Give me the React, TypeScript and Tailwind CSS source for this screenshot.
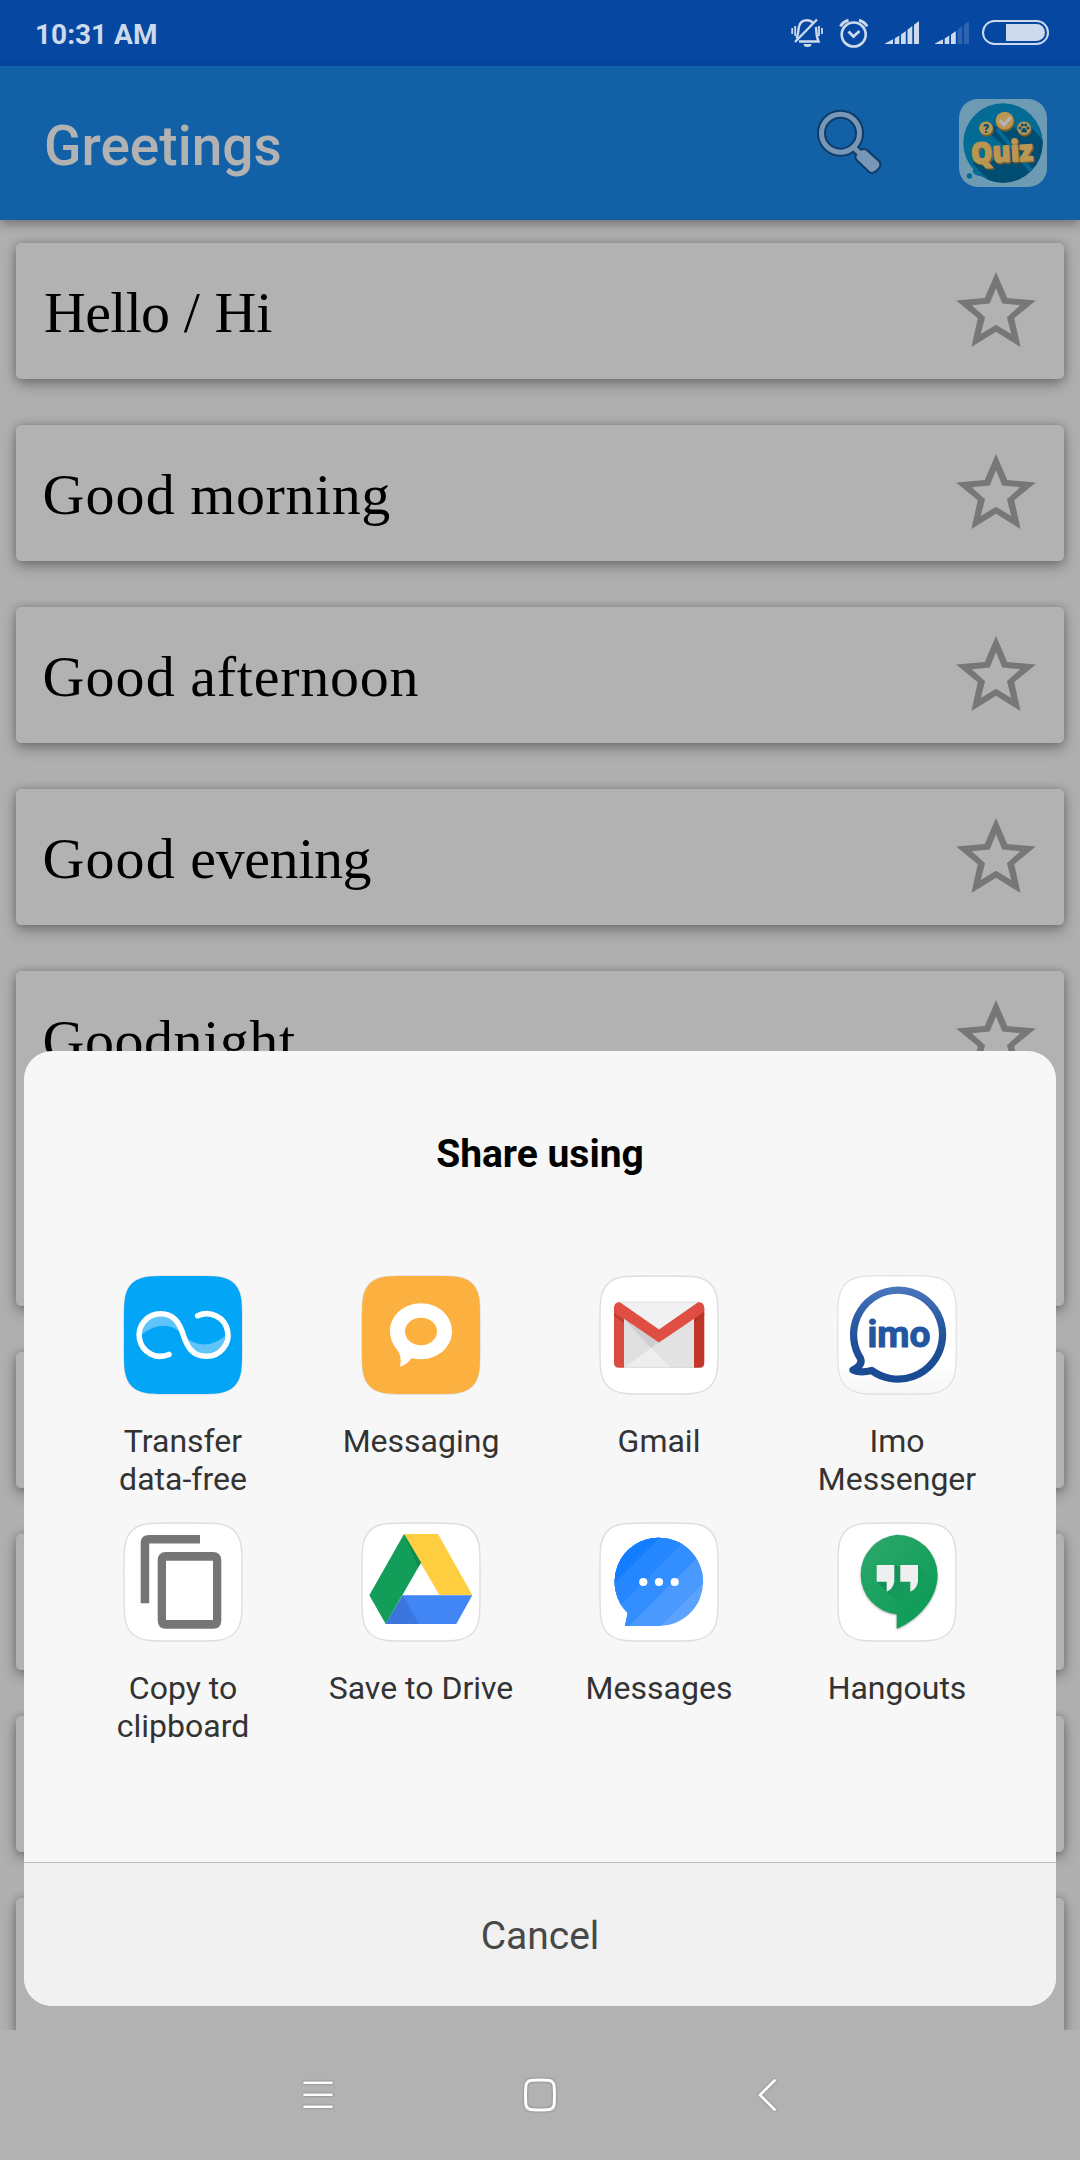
import React from "react";

const phrases = [
  {
    size: "h-[136px]",
    indent: "ml-[28px]",
    words: [
      { text: "Hello", tracking: "tracking-[-0.7px]" },
      { text: "/", tracking: "tracking-normal" },
      { text: "Hi", tracking: "tracking-normal" },
    ],
  },
  {
    size: "h-[136px]",
    indent: "ml-[26.5px]",
    words: [
      { text: "Good", tracking: "tracking-[1.1px]" },
      { text: "morning", tracking: "tracking-[0.57px]" },
    ],
  },
  {
    size: "h-[136px]",
    indent: "ml-[26.5px]",
    words: [
      { text: "Good", tracking: "tracking-[1.1px]" },
      { text: "afternoon", tracking: "tracking-[0.75px]" },
    ],
  },
  {
    size: "h-[136px]",
    indent: "ml-[26.5px]",
    words: [
      { text: "Good", tracking: "tracking-[1.1px]" },
      { text: "evening", tracking: "tracking-[-0.4px]" },
    ],
  },
  { size: "h-[335px]", indent: "ml-[26.5px]", words: [{ text: "Goodnight", tracking: "tracking-[0.55px]" }] },
  { size: "h-[136px]", indent: "", words: [] },
  { size: "h-[136px]", indent: "", words: [] },
  { size: "h-[136px]", indent: "", words: [] },
  { size: "h-[136px]", indent: "", words: [] },
];

function Star() {
  return (
    <svg className="mt-[29px] h-[75px] w-20 shrink-0" viewBox="0 0 240 226" fill="#787775" fillRule="evenodd">
      <path d="M120 0L154 78L240 86L175 139L194 226L120 180L46 226L65 139L0 86L86 78ZM120 49L101 95L47 100L87 136L74 187L120 159L166 187L153 136L193 100L139 95Z" />
    </svg>
  );
}

function PhraseCard({ words, size, indent }: (typeof phrases)[number]) {
  return (
    <div className="shrink-0 overflow-hidden px-4 py-[23px]">
      <div
        className={
          "flex justify-between rounded-[5px] bg-[#b2b2b2] pr-[28px] shadow-[0_6px_14px_rgba(0,0,0,0.28),0_0_9px_rgba(0,0,0,0.22)] " + size
        }
      >
        <p className={"mt-[37px] h-[66px] font-['Liberation_Serif',serif] text-[58px] leading-[66px] text-black " + indent}>
          {words.map((w, i) => (
            <React.Fragment key={w.text}>
              {i > 0 && " "}
              <span className={w.tracking}>{w.text}</span>
            </React.Fragment>
          ))}
        </p>
        {words.length > 0 && <Star />}
      </div>
    </div>
  );
}

function StatusIcons() {
  return (
    <div className="flex items-center text-[#cddaec]">
      <svg width="32" height="30" viewBox="0 0 32 30" fill="none" stroke="currentColor" strokeWidth="2.400">
        <path d="M5.500 20.500C7.500 17 7 12.500 8 8.500C9.200 4 12.500 2.300 16 2.300C18.800 2.300 20.500 3.200 22 5M25 9C25.500 13 25 18 27.500 23.500H8" />
        <path d="M26 1.500L4 24" strokeWidth="2.400" />
        <path d="M1.200 10v6M4.200 8v10M28 8v10M31 10v6" strokeWidth="1.800" />
        <path d="M12.500 26h8a4 3 0 0 1-8 0z" fill="currentColor" stroke="none" />
      </svg>
      <svg className="ml-4" width="30" height="30" viewBox="0 0 30 30" fill="none" stroke="currentColor" strokeWidth="2.600">
        <circle cx="14.700" cy="16.500" r="12" />
        <path d="M9.500 13.500L14.500 18.500L20.500 13" strokeWidth="2.800" />
        <path d="M1.500 8.500Q3.500 4 9.500 2.300M20 2.300Q26 4 28 8.500" strokeWidth="3" />
      </svg>
      <SignalBars strength={5} />
      <SignalBars strength={3} />
      <div className="ml-[13px] flex h-[25px] w-[67px] items-center justify-end rounded-full border-2 border-[#cddaec] pr-[2px]">
        <div className="h-[17px] w-[39px] rounded-r-full bg-[#cddaec]" />
      </div>
    </div>
  );
}

function SignalBars({ strength }: { strength: number }) {
  const bars = ["0,22.500 8,18.200 8,23 0,23", "9.700,17.500 14.300,14.500 14.300,23 9.700,23", "16,13.500 20.800,10 20.800,23 16,23", "22.500,8.700 27.300,5 27.300,23 22.500,23", "29,3.700 34,0 34,23 29,23"];
  return (
    <svg className="ml-4 mt-px" width="34" height="24" viewBox="0 0 34 24">
      {bars.map((points, i) => (
        <polygon key={points} points={points} fill="#cddaec" opacity={i < strength ? 1 : 0.2} />
      ))}
    </svg>
  );
}

const HANDLE = "M36 41L40.500 45.500Q38 48.500 41 51L52.500 62Q55.500 64.500 59.500 60.500Q64 56.500 61.500 53L50 42.500Q47 40 44 42L39.500 38Z";

function SearchIcon() {
  return (
    <svg width="66" height="68" viewBox="0 0 66 68" fill="none">
      <g stroke="#0e3b68" strokeLinejoin="round">
        <circle cx="23.500" cy="24.200" r="19" strokeWidth="9" />
        <path d={HANDLE} strokeWidth="4" />
      </g>
      <circle cx="23.500" cy="24.200" r="19" stroke="#7897b7" strokeWidth="5" />
      <path d={HANDLE} fill="#7897b7" />
    </svg>
  );
}

function QuizIcon() {
  return (
    <svg width="88" height="88" viewBox="0 0 88 88">
      <defs>
        <clipPath id="quizDisc"><circle cx="44" cy="44" r="39.700" /></clipPath>
      </defs>
      <rect width="88" height="88" rx="19" fill="#6f9ab3" />
      <circle cx="44" cy="44" r="39.700" fill="#036b94" />
      <g clipPath="url(#quizDisc)">
        <path d="M13 64L40 92H90V48L71 27L62 35L54 27L48 33L34 26L31 35L44 46V60Z" fill="#004d71" />
        <path d="M38 30L73 73" stroke="#036b94" strokeWidth="4" />
      </g>
      <circle cx="10.500" cy="77" r="2.700" fill="#036b94" />
      <path d="M15 68L31 81Q26 77 20 77Q12 75 14 70Z" fill="#036b94" />
      <g fill="#755c2b">
        <circle cx="27.800" cy="30.700" r="7" /><circle cx="46.300" cy="23.200" r="9.300" /><circle cx="65.800" cy="30.700" r="7" />
      </g>
      <g fill="#b99654">
        <circle cx="27" cy="29.300" r="6.800" /><circle cx="45.700" cy="21.700" r="9" /><circle cx="65" cy="29.300" r="6.800" />
      </g>
      <path d="M40.500 21.500L45 25.500L51.500 18.500" fill="none" stroke="#b7b3b0" strokeWidth="3.500" />
      <text x="27" y="33.700" textAnchor="middle" fontFamily="Roboto, sans-serif" fontWeight="900" fontSize="12" fill="#004d71">?</text>
      <g fill="#004d71">
        <circle cx="61" cy="29" r="1.500" /><circle cx="63.300" cy="26" r="1.500" /><circle cx="66.700" cy="26" r="1.500" /><circle cx="69" cy="29" r="1.500" />
        <path d="M62 33Q63 29 65 29Q67 29 68.200 33Q66 34 65 33Q63 34 62 33Z" />
      </g>
      <g fontFamily="'Open Sans', sans-serif" fontWeight="800" fontSize="29" strokeLinejoin="round" strokeWidth="1.400">
        <text x="12.800" y="64.500" textLength="62" lengthAdjust="spacingAndGlyphs" fill="#755c2b" stroke="#755c2b" transform="rotate(-3 44 54)">Quiz</text>
        <text x="12" y="63" textLength="62" lengthAdjust="spacingAndGlyphs" fill="#b99654" stroke="#b99654" transform="rotate(-3 44 54)">Quiz</text>
      </g>
    </svg>
  );
}

const TILE = "M59 0C70 0 89-.4 96 1Q114 4 117 22C118.400 29 118 48 118 59S118.400 89 117 96Q114 114 96 117C89 118.400 70 118 59 118S29 118.400 22 117Q4 114 1 96C-.4 89 0 70 0 59S-.4 29 1 22Q4 4 22 1C29-.4 48 0 59 0Z";

function Tile({ fill = "#ffffff", children }: { fill?: string; children: React.ReactNode }) {
  return (
    <svg className="overflow-visible" width="118" height="118" viewBox="0 0 118 118">
      <path d={TILE} fill={fill} stroke="#dedede" strokeWidth="1.400" />
      {fill !== "#ffffff" && <path d={TILE} fill={fill} />}
      {children}
    </svg>
  );
}

function TransferIcon() {
  return (
    <Tile fill="#03a5f7">
      <path d="M17 59Q18 39 37 38Q50 40 55 55Q38 43 17 59Z" fill="#5fc5f8" />
      <path d="M101 60Q99 79 82 80Q68 78 62 62Q82 76 101 60Z" fill="#5fc5f8" />
      <path d="M45 78.500A21.300 21.300 0 1 1 36.700 37.700C50 37.700 55.500 47 59.300 59S68.500 80.300 82 80.300A21.300 21.300 0 1 0 73.700 39.700" fill="none" stroke="#fff" strokeWidth="5.600" strokeLinecap="round" />
    </Tile>
  );
}

function MessagingIcon() {
  return (
    <Tile fill="#fcb03f">
      <path d="M59 27.300C76 27.300 90 39.500 90 55.300S76 83.300 59 83.300Q54 83.300 49.500 82.200Q44.500 89 38 90.700Q40.500 80 34.500 73Q28 65 28 55.300C28 39.500 42 27.300 59 27.300Z" fill="#fff" />
      <ellipse cx="59" cy="55.500" rx="16" ry="13.700" fill="#fcb03f" />
    </Tile>
  );
}

function GmailIcon() {
  return (
    <Tile>
      <path d="M20 26H98V91.700H20Z" fill="#e3e3e3" />
      <path d="M20 26H98L59 54Z" fill="#f1f1f1" />
      <path d="M24 91.700L50 72L24 43Z" fill="#e0e0e0" />
      <path d="M24 43L51 72L59 66Z" fill="#cfcfcf" />
      <path d="M24 91.700L51 72L71 91.700Z" fill="#eeeeee" />
      <path d="M51 72L59 66L94 43V91.700H71Z" fill="#e2e2e2" />
      <path d="M14 32L24 40V91.700H19Q14 91.700 14 86.700Z" fill="#d94b3f" />
      <path d="M94 40L104.300 32V86.700Q104.300 91.700 99.300 91.700H94Z" fill="#c1382a" />
      <path d="M14 37L24 44V47L14 40ZM104.300 37L94 44V47L104.300 40Z" fill="#a93226" opacity=".6" />
      <path d="M19.500 26L59 53.500L98.500 26Q104.300 26.500 104.300 32Q104.300 35.500 101 38L59 66.500L17 38Q14 35.500 14 32Q14 26.500 19.500 26Z" fill="#e04d42" />
      <path d="M20 26H98M24 91.300H94" stroke="#d4d4d4" strokeWidth=".7" />
    </Tile>
  );
}

function ImoIcon() {
  return (
    <Tile>
      <defs>
        <linearGradient id="imoBlue" x1="0" y1="10" x2="0" y2="106" gradientUnits="userSpaceOnUse">
          <stop stopColor="#4c78bd" /><stop offset=".35" stopColor="#2a5ba4" /><stop offset=".7" stopColor="#1c4c94" /><stop offset="1" stopColor="#184b95" />
        </linearGradient>
        <linearGradient id="imoShade" x1="0" y1="0" x2="0" y2="1">
          <stop offset=".75" stopColor="#fff" /><stop offset="1" stopColor="#f6f6f6" />
        </linearGradient>
      </defs>
      <path d={TILE} fill="url(#imoShade)" stroke="#dedede" strokeWidth=".7" />
      <path d="M33.700 94.500A44.500 44.500 0 1 0 22.500 82.500Q25 89 15 94Q22 97.500 33.700 94.500Z" fill="none" stroke="url(#imoBlue)" strokeWidth="7.300" strokeLinejoin="round" />
      <text x="29.500" y="71" textLength="63" lengthAdjust="spacingAndGlyphs" fontFamily="Roboto, sans-serif" fontWeight="700" fontSize="36" fill="#2356a0" stroke="#2356a0" strokeWidth="1" strokeLinejoin="round">imo</text>
    </Tile>
  );
}

function CopyIcon() {
  return (
    <Tile>
      <path d="M16.700 80.300V20.300Q16.700 12 25 12H76V20.600H25.200V80.300Z" fill="#757575" />
      <path fillRule="evenodd" d="M42 29H89Q97.300 29 97.300 37.500V97.500Q97.300 105.700 89 105.700H42Q33.700 105.700 33.700 97.500V37.500Q33.700 29 42 29ZM42 37.700V97H89V37.700Z" fill="#757575" />
    </Tile>
  );
}

function DriveIcon() {
  return (
    <Tile>
      <path d="M40.700 72.300H110.300L94.300 101H23.700Z" fill="#4285f4" />
      <path d="M40.700 72.300L57 101H23.700Z" fill="#3b76df" />
      <path d="M42 11H76L110.300 72H77.300Z" fill="#ffcd40" />
      <path d="M42 11L59 39.700L23.700 101L7.300 72.300Z" fill="#129d59" />
      <path d="M42 11L59 39.700L56 44Z" fill="#0e8b4e" />
    </Tile>
  );
}

function MessagesIcon() {
  return (
    <Tile>
      <defs>
        <clipPath id="bubble"><path d="M59 14.700A44 44 0 0 1 59 103H25L27.700 90A44 44 0 0 1 59 14.700Z" /></clipPath>
      </defs>
      <g clipPath="url(#bubble)">
        <path d="M0 0H118V118H0Z" fill="#5ba3ff" />
        <path d="M0 0H163.300L0 163.300Z" fill="#4999ff" />
        <path d="M0 0H132L0 132Z" fill="#338fff" />
        <path d="M0 0H103L0 103Z" fill="#2487ff" />
        <path d="M0 0H74.300L0 74.300Z" fill="#127eff" />
      </g>
      <g fill="#fff"><circle cx="43.300" cy="59" r="4.100" /><circle cx="59" cy="59" r="4.100" /><circle cx="74.700" cy="59" r="4.100" /></g>
    </Tile>
  );
}

const PIN = "M58.700 11.700A40.500 40.500 0 0 1 99.600 52C99.600 76 80 97 58.700 105.700V91.300A40 40 0 0 1 58.700 11.700Z";

function HangoutsIcon() {
  return (
    <Tile>
      <defs>
        <linearGradient id="hangGreen" x1="25" y1="20" x2="90" y2="85" gradientUnits="userSpaceOnUse">
          <stop stopColor="#2aa76a" /><stop offset="1" stopColor="#0f9d58" />
        </linearGradient>
        <linearGradient id="hangShadow" x1="40" y1="50" x2="78" y2="88" gradientUnits="userSpaceOnUse">
          <stop stopColor="#0b7a48" stopOpacity=".7" /><stop offset="1" stopColor="#0f9d58" stopOpacity="0" />
        </linearGradient>
        <clipPath id="hangPin"><path d={PIN} /></clipPath>
      </defs>
      <path className="drop-shadow-[0_1px_1px_rgba(0,0,0,0.35)]" d={PIN} fill="url(#hangGreen)" />
      <g clipPath="url(#hangPin)" fill="url(#hangShadow)">
        <path d="M38.700 58.700L72 92L112 98V74L80 42L62 44L56.300 42V58Z" />
      </g>
      <path d="M38.700 42H56.300V58.700Q55 66 48.700 68.700V58.700H38.700ZM62.300 42H80V58.700Q78.700 66 72.300 68.700V58.700H62.300Z" fill="#efefef" />
    </Tile>
  );
}

const targets = [
  { lines: ["Transfer", "data-free"], icon: <TransferIcon /> },
  { lines: ["Messaging"], icon: <MessagingIcon /> },
  { lines: ["Gmail"], icon: <GmailIcon /> },
  { lines: ["Imo", "Messenger"], icon: <ImoIcon /> },
  { lines: ["Copy to", "clipboard"], icon: <CopyIcon /> },
  { lines: ["Save to Drive"], icon: <DriveIcon /> },
  { lines: ["Messages"], icon: <MessagesIcon /> },
  { lines: ["Hangouts"], icon: <HangoutsIcon /> },
];

function ShareSheet() {
  return (
    <section className="absolute left-6 top-[1051px] flex h-[955px] w-[1032px] flex-col overflow-hidden rounded-[28px] bg-[#f7f7f7]">
      <h2 className="mt-[80px] text-center text-[39px] leading-[46px] font-bold text-black">Share using</h2>
      <div className="mt-[99px] grid grid-cols-4 gap-y-[25px] px-10">
        {targets.map((t) => (
          <button key={t.lines.join(" ")} className="flex h-[222px] flex-col items-center">
            {t.icon}
            <span className="mt-[28px] text-[32px] leading-[38px] text-[#333333]">
              {t.lines.map((line) => (
                <span key={line} className="block whitespace-nowrap">{line}</span>
              ))}
            </span>
          </button>
        ))}
      </div>
      <button className="mt-auto h-[144px] border-t border-[#bdbdbd] bg-[#f1f1f1] pt-1 text-[39px] text-[#484848]">Cancel</button>
    </section>
  );
}

export default function App() {
  return (
    <div className="relative flex h-[2160px] w-[1080px] flex-col overflow-hidden bg-[#b2b2b2] font-[Roboto,sans-serif]">
      <div className="flex h-[66px] shrink-0 items-center justify-between bg-[#0647a1] pb-px pl-[35px] pr-[31px]">
        <span className="mt-[5px] text-[28px] font-bold text-[#cddaec]">10:31 AM</span>
        <StatusIcons />
      </div>
      <header className="relative z-10 flex h-[154px] shrink-0 items-center bg-[#1261a7] pl-[44px] pr-[33px] shadow-[0_4px_10px_rgba(0,0,0,0.35)]">
        <h1 className="mt-[7px] grow text-[55px] font-medium text-[#b2b2b2]">Greetings</h1>
        <SearchIcon />
        <div className="ml-[76px]"><QuizIcon /></div>
      </header>
      <main className="flex h-[1810px] shrink-0 flex-col overflow-hidden bg-[#afafaf]">
        {phrases.map((p, i) => (
          <PhraseCard key={i} {...p} />
        ))}
      </main>
      <nav className="flex grow items-center pl-[301px]">
        <svg className="drop-shadow-[0_0_1px_rgba(0,0,0,0.35)]" width="34" height="34" viewBox="0 0 34 34" fill="none" stroke="#fff" strokeWidth="2.600" strokeLinecap="round">
          <path d="M3.500 4.700H30.500M3.500 16.700H30.500M3.500 28.700H30.500" />
        </svg>
        <svg className="ml-[188px] drop-shadow-[0_0_1px_rgba(0,0,0,0.35)]" width="34" height="34" viewBox="0 0 34 34" fill="none" stroke="#fff" strokeWidth="3">
          <path d="M17 2Q25 2 28 3Q31 4.500 31.200 8.500Q31.800 17 31.200 26Q31 29.500 28 31Q25 32 17 32T6 31Q3 29.500 2.800 26Q2.200 17 2.800 8.500Q3 4.500 6 3Q9 2 17 2Z" />
        </svg>
        <svg className="ml-[200px] drop-shadow-[0_0_1px_rgba(0,0,0,0.35)]" width="20" height="34" viewBox="0 0 20 34" fill="none" stroke="#fff" strokeWidth="2.800" strokeLinecap="round" strokeLinejoin="round">
          <path d="M17.500 2.500L3 17L17.500 31.500" />
        </svg>
      </nav>
      <ShareSheet />
    </div>
  );
}
